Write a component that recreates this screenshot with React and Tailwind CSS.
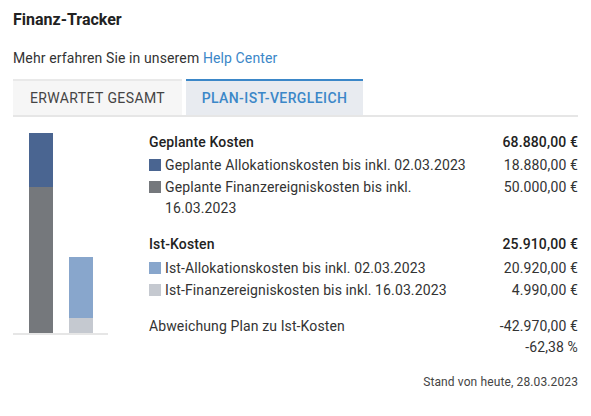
import React from 'react';

const planned = [
    { color: 'bg-[#4a6591]', label: 'Geplante Allokationskosten bis inkl. 02.03.2023', value: '18.880,00 €' },
    { color: 'bg-[#75787c]', label: 'Geplante Finanzereigniskosten bis inkl. 16.03.2023', value: '50.000,00 €' },
];

const actual = [
    { color: 'bg-[#88a6cc]', label: 'Ist-Allokationskosten bis inkl. 02.03.2023', value: '20.920,00 €' },
    { color: 'bg-[#c5c9d0]', label: 'Ist-Finanzereigniskosten bis inkl. 16.03.2023', value: '4.990,00 €' },
];

const LegendRow = ({ color, label, value }) => (
    <div className="flex justify-between gap-6">
        <div className="flex items-start">
            <span className={`mt-[4px] mr-[4px] h-[12px] w-[12px] shrink-0 ${color}`} />
            <span className="max-w-[312px]">{label}</span>
        </div>
        <span className="whitespace-nowrap">{value}</span>
    </div>
);

const App = () => {
    return (
        <div
            className="w-[591px] h-[416px] bg-white px-[13px] pt-[9px] text-[14px] text-[#333] leading-[21px] tracking-[0.12px]"
            style={{ fontFamily: 'Roboto, "Liberation Sans", sans-serif' }}
        >
            <h1 className="text-[16px] font-bold text-[#222] leading-[22px] tracking-normal">Finanz-Tracker</h1>

            <p className="mt-[17px]">
                Mehr erfahren Sie in unserem <a className="text-[#3b87c8]">Help Center</a>
            </p>

            <div className="mt-[10px] flex gap-[4px] border-b-2 border-[#e6e6e6] w-[565px]">
                <button className="w-[169px] h-[36px] bg-[#f6f6f6] border-t-2 border-[#e9e9e9] text-[#444] uppercase tracking-[0.4px]">
                    Erwartet gesamt
                </button>
                <button className="w-[177px] h-[36px] bg-[#e8ebf0] border-t-2 border-[#3b87c8] text-[#3b87c8] font-medium uppercase tracking-[0.4px]">
                    Plan-Ist-Vergleich
                </button>
            </div>

            <div className="flex mt-[17px]">
                <div className="w-[95px] h-[201px] flex items-end gap-[16px] pl-[16px] border-b-2 border-[#e6e6e6]">
                    <div className="w-[24px] flex flex-col">
                        <div className="h-[54px] bg-[#4a6591]" />
                        <div className="h-[146px] bg-[#75787c]" />
                    </div>
                    <div className="w-[24px] flex flex-col">
                        <div className="h-[61px] bg-[#88a6cc]" />
                        <div className="h-[15px] bg-[#c5c9d0]" />
                    </div>
                </div>

                <div className="ml-[41px] flex-1 -mt-[2px]">
                    <div className="flex justify-between font-medium text-[#222]">
                        <span>Geplante Kosten</span>
                        <span>68.880,00 €</span>
                    </div>
                    <div className="mt-[2px] flex flex-col gap-[1px]">
                        {planned.map((row) => (
                            <LegendRow key={row.label} {...row} />
                        ))}
                    </div>

                    <div className="mt-[15px] flex justify-between font-medium text-[#222]">
                        <span>Ist-Kosten</span>
                        <span>25.910,00 €</span>
                    </div>
                    <div className="mt-[3px] flex flex-col gap-[1px]">
                        {actual.map((row) => (
                            <LegendRow key={row.label} {...row} />
                        ))}
                    </div>

                    <div className="mt-[15px] flex justify-between">
                        <span>Abweichung Plan zu Ist-Kosten</span>
                        <span>-42.970,00 €</span>
                    </div>
                    <div className="text-right">-62,38 %</div>
                </div>
            </div>

            <div className="mt-[14px] text-right text-[12px] text-[#444]">Stand von heute, 28.03.2023</div>
        </div>
    );
};

export default App;
